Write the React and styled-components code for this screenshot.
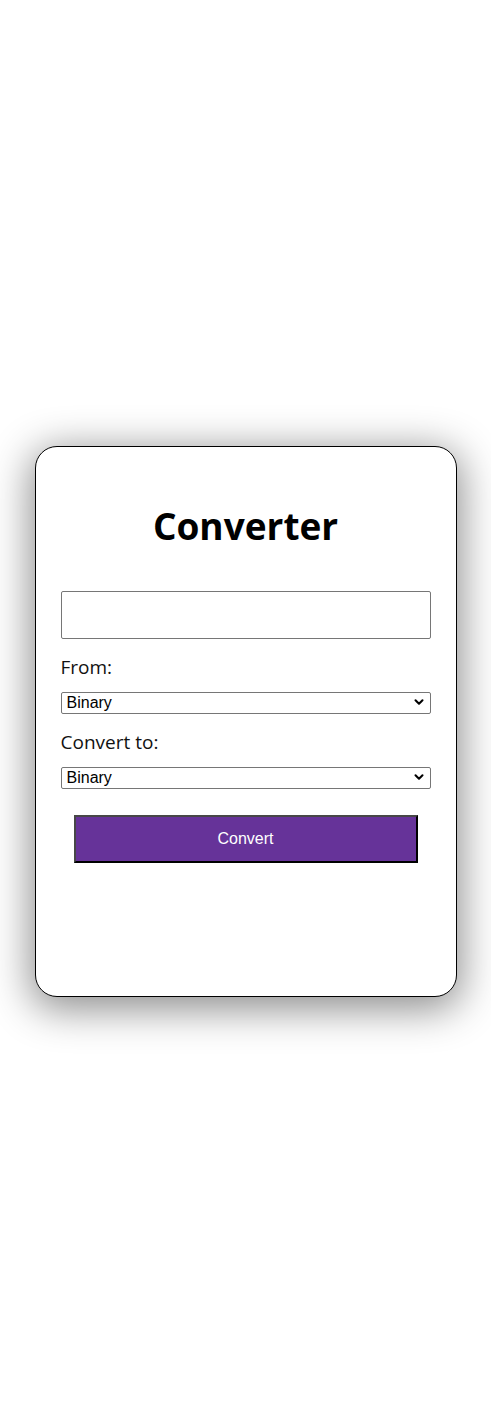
import React, { useState } from "react";
import styled, { createGlobalStyle } from "styled-components";
import { ChevronDown } from "lucide-react";

const GlobalStyle = createGlobalStyle`
  body {
    margin: 0;
    background: #ffffff;
    font-family: "Open Sans", "Noto Sans", sans-serif;
  }
`;

const Page = styled.div`
  display: flex;
  justify-content: center;
  align-items: flex-start;
  min-height: 100vh;
  padding-top: 446px;
  box-sizing: border-box;
`;

const Card = styled.div`
  box-sizing: border-box;
  width: 422px;
  height: 551px;
  padding: 55px 25px 0;
  background: #ffffff;
  border: 1px solid #000000;
  border-radius: 22px;
  box-shadow: 0 8px 40px 4px rgba(0, 0, 0, 0.45);
  display: flex;
  flex-direction: column;
`;

const Title = styled.h1`
  margin: 0 0 41px;
  font-size: 37px;
  line-height: 48px;
  font-weight: 700;
  text-align: center;
  color: #000000;
`;

const TextInput = styled.input`
  box-sizing: border-box;
  width: 100%;
  height: 48px;
  margin: 0 0 16px;
  padding: 0 10px;
  border: 1px solid #767676;
  border-radius: 2px;
  font-size: 16px;
  font-family: "Liberation Sans", Arial, sans-serif;
`;

const Label = styled.label`
  display: block;
  margin: 0 0 12px;
  font-size: 19px;
  line-height: 24px;
  color: #111111;
`;

const SelectWrap = styled.div`
  position: relative;
  height: 22px;
  margin: 0 0 ${(props) => props.$gap || 17}px;

  svg {
    position: absolute;
    right: 5px;
    top: 4px;
    pointer-events: none;
    color: #000000;
  }
`;

const Select = styled.select`
  box-sizing: border-box;
  width: 100%;
  height: 22px;
  padding: 0 24px 0 5px;
  appearance: none;
  font-size: 16px;
  font-family: "Liberation Sans", Arial, sans-serif;
  color: #000000;
  border: 1px solid #767676;
  border-radius: 2px;
  background: #ffffff;
`;

const ConvertButton = styled.button`
  box-sizing: border-box;
  align-self: center;
  width: 344px;
  height: 48px;
  background: #663399;
  color: #ffffff;
  font-size: 16px;
  font-family: "Liberation Sans", Arial, sans-serif;
  border-style: solid;
  border-width: 2px;
  border-color: #474747 #000000 #000000 #474747;
  cursor: pointer;
`;

const bases = ["Binary", "Decimal", "Octal", "Hexadecimal"];

function BaseSelect({ id, value, onChange, gap }) {
  return (
    <SelectWrap $gap={gap}>
      <Select id={id} value={value} onChange={(e) => onChange(e.target.value)}>
        {bases.map((b) => (
          <option key={b}>{b}</option>
        ))}
      </Select>
      <ChevronDown size={14} strokeWidth={3.5} />
    </SelectWrap>
  );
}

export default function App() {
  const [value, setValue] = useState("");
  const [from, setFrom] = useState("Binary");
  const [to, setTo] = useState("Binary");

  return (
    <>
      <GlobalStyle />
      <Page>
        <Card>
          <Title>Converter</Title>
          <TextInput value={value} onChange={(e) => setValue(e.target.value)} />
          <Label htmlFor="from">From:</Label>
          <BaseSelect id="from" value={from} onChange={setFrom} />
          <Label htmlFor="to">Convert to:</Label>
          <BaseSelect id="to" value={to} onChange={setTo} gap={27} />
          <ConvertButton>Convert</ConvertButton>
        </Card>
      </Page>
    </>
  );
}
